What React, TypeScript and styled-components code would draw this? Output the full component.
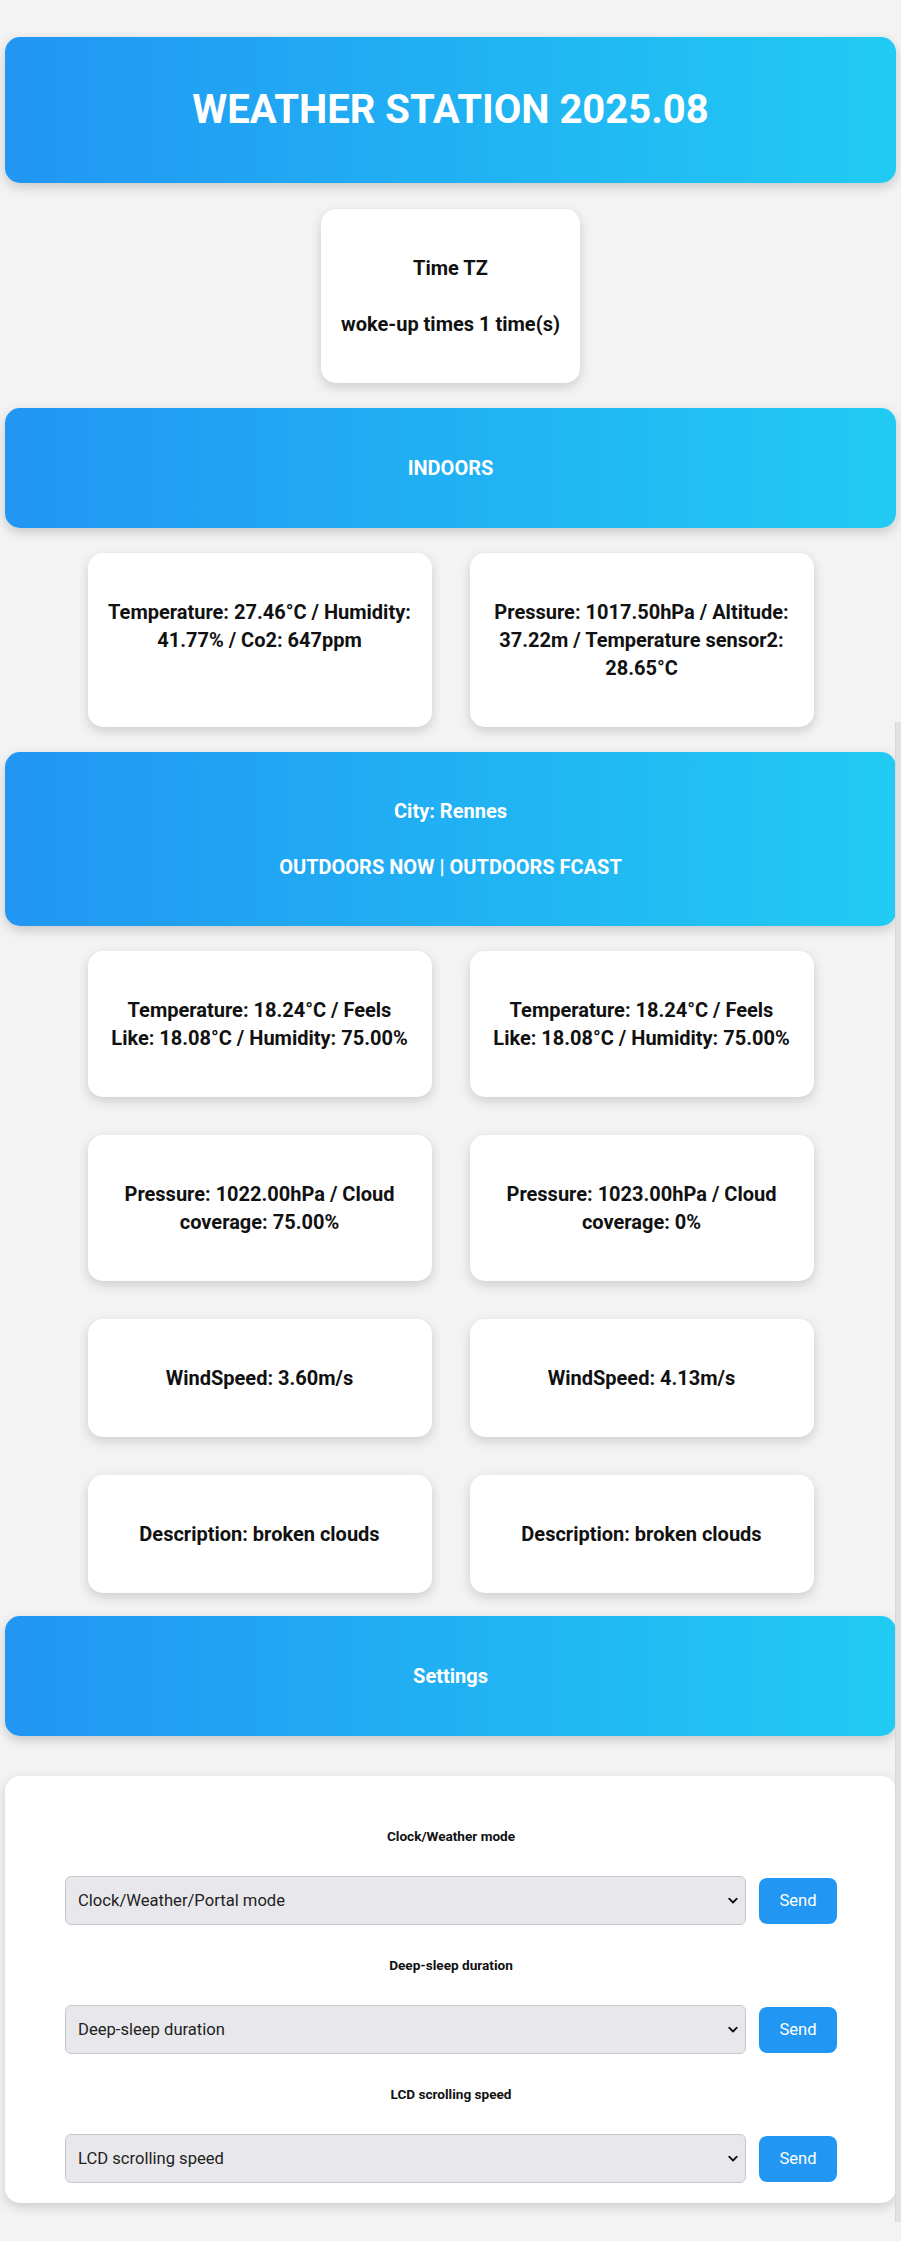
import React from "react";
import styled, { createGlobalStyle } from "styled-components";

const GlobalStyle = createGlobalStyle`
  html, body {
    margin: 0;
    padding: 0;
    background: #f3f3f3;
  }
  body {
    font-family: Roboto, "Liberation Sans", Arial, sans-serif;
    color: #111;
  }
  * { box-sizing: border-box; }
`;

const Page = styled.div`
  position: relative;
  display: flex;
  flex-direction: column;
  padding: 37px 5px 38px 5px;
  min-height: 2241px;
`;

const Banner = styled.header<{ $mt?: number; $pad?: number }>`
  margin-top: ${(p) => p.$mt ?? 0}px;
  background: linear-gradient(90deg, #2196f3 0%, #21cbf3 100%);
  border-radius: 15px;
  box-shadow: 0 4px 12px rgba(0, 0, 0, 0.18);
  color: #fff;
  text-align: center;
  padding: ${(p) => p.$pad ?? 45}px 20px;
`;

const Title = styled.h1`
  margin: 0;
  font-size: 40px;
  line-height: 60px;
  font-weight: 700;
`;

const Lines = styled.div`
  display: flex;
  flex-direction: column;
  gap: 28px;
`;

const BannerLine = styled.h3`
  margin: 0;
  font-size: 20px;
  line-height: 28px;
  font-weight: 700;
  color: #fff;
`;

const Card = styled.div`
  background: #fff;
  border-radius: 15px;
  box-shadow: 0 4px 12px rgba(0, 0, 0, 0.16);
  padding: 45px 20px;
  text-align: center;
`;

const CardText = styled.h3`
  margin: 0;
  font-size: 20px;
  line-height: 28px;
  font-weight: 700;
  color: #111;
`;

const TimeCard = styled(Card)<{ $mt?: number }>`
  align-self: center;
  width: fit-content;
  margin-top: ${(p) => p.$mt ?? 0}px;
`;

const Grid = styled.section<{ $mt?: number }>`
  margin: ${(p) => p.$mt ?? 25}px auto 0;
  width: 726px;
  display: grid;
  grid-template-columns: 1fr 1fr;
  gap: 38px;
`;

const FormCard = styled.form<{ $mt?: number }>`
  margin-top: ${(p) => p.$mt ?? 0}px;
  background: #fff;
  border-radius: 15px;
  box-shadow: 0 4px 12px rgba(0, 0, 0, 0.16);
  padding: 20px 59px 20px 60px;
  display: flex;
  flex-direction: column;
`;

const FieldLabel = styled.h5`
  margin: 30px 0;
  font-size: 13.6px;
  line-height: 20px;
  font-weight: 700;
  text-align: center;
  color: #111;
`;

const FieldRow = styled.div`
  display: flex;
  align-items: center;
  gap: 13px;
`;

const SelectWrap = styled.div`
  position: relative;
  flex: 1;
`;

const Select = styled.select`
  appearance: none;
  -webkit-appearance: none;
  width: 100%;
  height: 49px;
  background: #e8e8ec;
  border: 1px solid #c8c8cc;
  border-radius: 6px;
  padding: 0 32px 0 12px;
  font-family: Roboto, "Liberation Sans", Arial, sans-serif;
  font-size: 16.6px;
  color: #222;
`;

const Chevron = styled.svg`
  position: absolute;
  right: 8px;
  top: 50%;
  transform: translateY(-50%);
  pointer-events: none;
`;

const SendButton = styled.button`
  width: 78px;
  height: 46px;
  border: none;
  border-radius: 8px;
  background: #2196f3;
  color: #fff;
  font-family: Roboto, "Liberation Sans", Arial, sans-serif;
  font-size: 16.6px;
`;

const ScrollThumb = styled.div`
  position: absolute;
  right: 0;
  top: 722px;
  width: 6px;
  height: 1500px;
  background: #e2e2e2;
  border-left: 1px solid #d8d8d8;
`;

const fields = [
  { label: "Clock/Weather mode", placeholder: "Clock/Weather/Portal mode" },
  { label: "Deep-sleep duration", placeholder: "Deep-sleep duration" },
  { label: "LCD scrolling speed", placeholder: "LCD scrolling speed" },
];

const outdoorCards = [
  [
    "Temperature: 18.24°C / Feels Like: 18.08°C / Humidity: 75.00%",
    "Temperature: 18.24°C / Feels Like: 18.08°C / Humidity: 75.00%",
  ],
  [
    "Pressure: 1022.00hPa / Cloud coverage: 75.00%",
    "Pressure: 1023.00hPa / Cloud coverage: 0%",
  ],
  ["WindSpeed: 3.60m/s", "WindSpeed: 4.13m/s"],
  ["Description: broken clouds", "Description: broken clouds"],
];

export default function App() {
  return (
    <>
      <GlobalStyle />
      <Page>
        <ScrollThumb />
        <Banner $pad={43}>
          <Title>WEATHER STATION 2025.08</Title>
        </Banner>

        <TimeCard $mt={26}>
          <Lines>
            <CardText>Time TZ</CardText>
            <CardText>woke-up times 1 time(s)</CardText>
          </Lines>
        </TimeCard>

        <Banner $mt={25} $pad={46}>
          <BannerLine>INDOORS</BannerLine>
        </Banner>

        <Grid $mt={25}>
          <Card>
            <CardText>Temperature: 27.46°C / Humidity: 41.77% / Co2: 647ppm</CardText>
          </Card>
          <Card>
            <CardText>
              Pressure: 1017.50hPa / Altitude: 37.22m / Temperature sensor2: 28.65°C
            </CardText>
          </Card>
        </Grid>

        <Banner $mt={25} $pad={45}>
          <Lines>
            <BannerLine>City: Rennes</BannerLine>
            <BannerLine>OUTDOORS NOW | OUTDOORS FCAST</BannerLine>
          </Lines>
        </Banner>

        <Grid $mt={25}>
          {outdoorCards.flat().map((t, i) => (
            <Card key={i}>
              <CardText>{t}</CardText>
            </Card>
          ))}
        </Grid>

        <Banner $mt={23} $pad={46}>
          <BannerLine>Settings</BannerLine>
        </Banner>

        <FormCard $mt={40} onSubmit={(e) => e.preventDefault()}>
          {fields.map((f) => (
            <React.Fragment key={f.label}>
              <FieldLabel>{f.label}</FieldLabel>
              <FieldRow>
                <SelectWrap>
                  <Select defaultValue="">
                    <option value="">{f.placeholder}</option>
                  </Select>
                  <Chevron width="10" height="7" viewBox="0 0 10 7">
                    <path
                      d="M1.2 1.2 L5 5 L8.8 1.2"
                      fill="none"
                      stroke="#111"
                      strokeWidth="1.8"
                      strokeLinecap="round"
                      strokeLinejoin="round"
                    />
                  </Chevron>
                </SelectWrap>
                <SendButton type="button">Send</SendButton>
              </FieldRow>
            </React.Fragment>
          ))}
        </FormCard>
      </Page>
    </>
  );
}
